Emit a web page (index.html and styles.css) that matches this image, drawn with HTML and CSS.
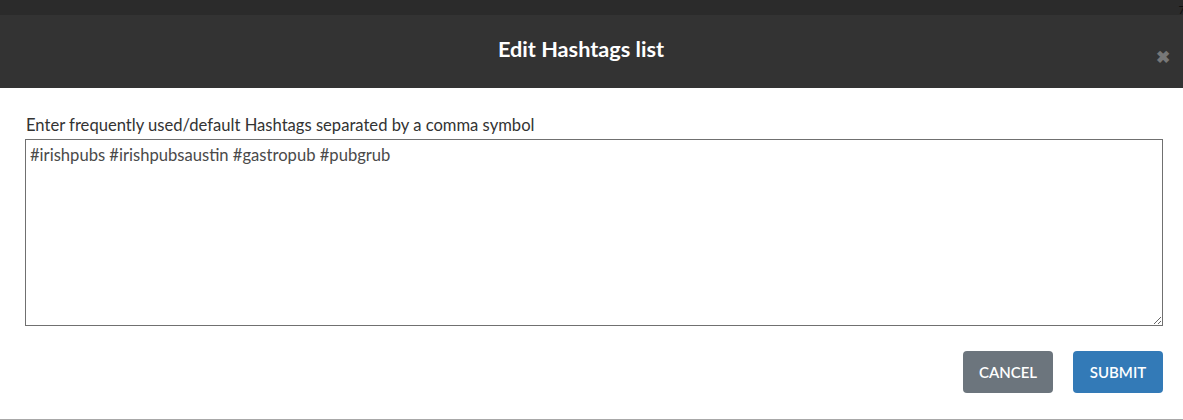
FILE: index.html
```html
<!DOCTYPE html>
<html>
<head>
<meta charset="utf-8">
<link rel="stylesheet" href="styles.css">
</head>
<body>
<div class="topbar"><span class="corner">7</span></div>
<div class="modal">
  <div class="header">
    <h1 class="title">Edit Hashtags list</h1>
    <span class="close">&#x2716;</span>
  </div>
  <div class="content">
    <label class="label" for="tags">Enter frequently used/default Hashtags separated by a comma symbol</label>
    <textarea class="input" id="tags">#irishpubs #irishpubsaustin #gastropub #pubgrub</textarea>
    <div class="actions">
      <button class="btn btn-cancel">CANCEL</button>
      <button class="btn btn-submit">SUBMIT</button>
    </div>
  </div>
</div>
</body>
</html>
```
FILE: styles.css
```css
html, body {
  margin: 0;
  padding: 0;
  background: #fff;
  font-family: Lato, "Liberation Sans", sans-serif;
}
.topbar {
  height: 15px;
  background: #2b2b2b;
  position: relative;
}
.corner {
  position: absolute;
  right: -2px;
  top: 3px;
  font-size: 11px;
  color: #111;
}
.modal {
  height: 405px;
  border-bottom: 1px solid #a8a8a8;
  box-sizing: border-box;
}
.header {
  height: 73px;
  background: #333333;
  display: flex;
  align-items: center;
  justify-content: center;
  position: relative;
  padding-right: 21px;
}
.title {
  margin: 0;
  color: #fff;
  font-size: 21.7px;
  font-weight: 700;
  margin-top: -5px;
}
.close {
  position: absolute;
  right: 13px;
  top: 33px;
  color: #777;
  font-size: 17px;
  font-weight: 700;
  line-height: 1;
}
.content {
  padding: 27px 20px 0 25px;
  display: flex;
  flex-direction: column;
}
.label {
  font-size: 16.6px;
  color: #333;
  line-height: 21px;
  padding-left: 1px;
  margin-bottom: 3px;
}
.input {
  height: 187px;
  box-sizing: border-box;
  border: 1px solid #707070;
  border-radius: 0;
  padding: 5px 4px;
  font-family: inherit;
  font-size: 16.6px;
  color: #4a4a4a;
  resize: vertical;
  margin: 0;
  outline: none;
}
.actions {
  display: flex;
  justify-content: flex-end;
  gap: 20px;
  margin-top: 25px;
}
.btn {
  width: 90px;
  height: 42px;
  border: none;
  border-radius: 4px;
  color: #fff;
  font-family: inherit;
  font-size: 15px;
  font-weight: 600;
  cursor: pointer;
  padding: 0;
}
.btn-cancel { background: #6c757d; }
.btn-submit { background: #337ab7; }
```
